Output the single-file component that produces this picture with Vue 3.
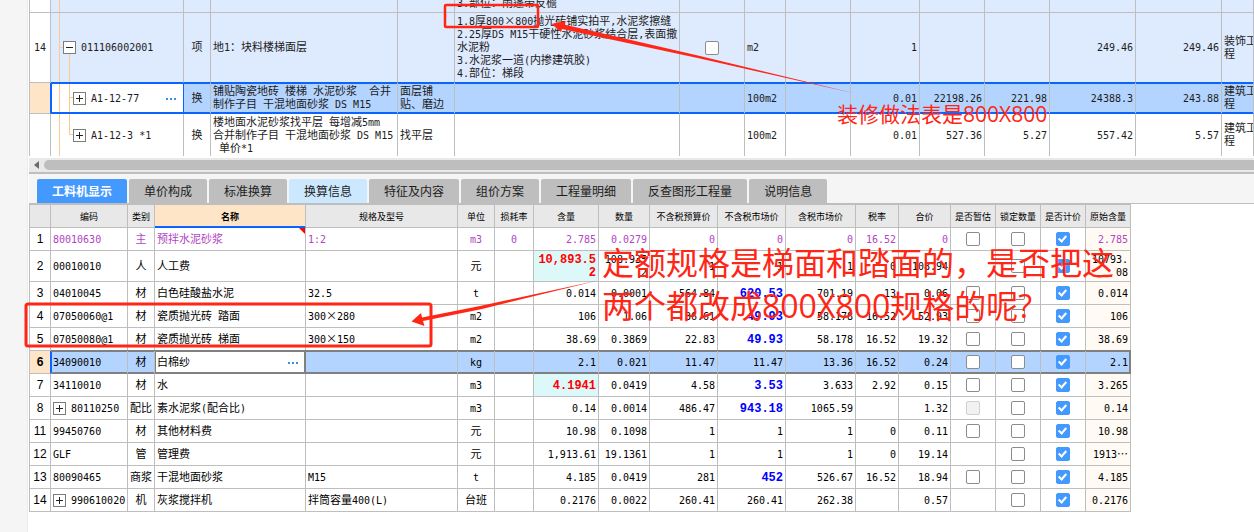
<script setup>
import { h } from 'vue'

// Splits a label into half-width and full-width runs so each gets its own face.
const Txt = (props) =>
  String(props.t ?? '').split('\n').map((line) =>
    h('span', { class: 'txt-line' },
      (line.match(/[\x20-\x7e]+|[^\x20-\x7e]+/g) || ['\u00a0']).map((run) =>
        h('span', { class: /^[\x20-\x7e]/.test(run) ? 'txt-latin' : 'txt-han' }, run)
      )
    )
  )
Txt.props = ['t']

const topCols = [21, 133, 27, 187, 57, 225, 65, 41, 65, 69, 65, 65, 86, 86]
const tabs = ['工料机显示', '单价构成', '标准换算', '换算信息', '特征及内容', '组价方案', '工程量明细', '反查图形工程量', '说明信息']
const cols = [
  ['', 21], ['编码', 77], ['类别', 27], ['名称', 151], ['规格及型号', 152], ['单位', 37], ['损耗率', 39],
  ['含量', 65], ['数量', 51], ['不含税预算价', 68], ['不含税市场价', 68], ['含税市场价', 70],
  ['税率', 43], ['合价', 52], ['是否暂估', 45], ['锁定数量', 45], ['是否计价', 45], ['原始含量', 45]
]
const r = (no, code, type, name, spec, unit, loss, qty, amount, budget, market, taxed, rate, total, est, orig, extra = {}) =>
  ({ no, code, type, name, spec, unit, loss, nums: [qty, amount, budget, market, taxed, rate, total], est, orig, ...extra })
const rows = [
  r('1', '80010630', '主', '预拌水泥砂浆', '1:2', 'm3', '0', '2.785', '0.0279', '0', '0', '0', '16.52', '0', 'on', '2.785', { primary: true }),
  r('2', '00010010', '人', '人工费', '', '元', '', '10,893.5\n2', '108.935\n2', '1', '1', '1', '0', '108.94', '', '10793.\n08', { changed: true, tall: true }),
  r('3', '04010045', '材', '白色硅酸盐水泥', '32.5', 't', '', '0.014', '0.0001', '564.84', '620.53', '701.19', '13', '0.06', 'on', '0.014', { priced: true }),
  r('4', '07050060@1', '材', '瓷质抛光砖 踏面', '300×280', 'm2', '', '106', '1.06', '36.61', '49.93', '58.178', '16.52', '52.93', 'on', '106', { priced: true }),
  r('5', '07050080@1', '材', '瓷质抛光砖 梯面', '300×150', 'm2', '', '38.69', '0.3869', '22.83', '49.93', '58.178', '16.52', '19.32', 'on', '38.69', { priced: true }),
  r('6', '34090010', '材', '白棉纱', '', 'kg', '', '2.1', '0.021', '11.47', '11.47', '13.36', '16.52', '0.24', 'on', '2.1', { current: true }),
  r('7', '34110010', '材', '水', '', 'm3', '', '4.1941', '0.0419', '4.58', '3.53', '3.633', '2.92', '0.15', 'on', '3.265', { changed: true, priced: true }),
  r('8', '80110250', '配比', '素水泥浆(配合比)', '', 'm3', '', '0.14', '0.0014', '486.47', '943.18', '1065.59', '', '1.32', 'off', '0.14', { group: true, priced: true }),
  r('11', '99450760', '材', '其他材料费', '', '元', '', '10.98', '0.1098', '1', '1', '1', '0', '0.11', 'on', '10.98'),
  r('12', 'GLF', '管', '管理费', '', '元', '', '1,913.61', '19.1361', '1', '1', '1', '0', '19.14', '', '1913…'),
  r('13', '80090465', '商浆', '干混地面砂浆', 'M15', 't', '', '4.185', '0.0419', '281', '452', '526.67', '16.52', '18.94', 'on', '4.185', { priced: true }),
  r('14', '990610020', '机', '灰浆搅拌机', '拌筒容量400(L)', '台班', '', '0.2176', '0.0022', '260.41', '260.41', '262.38', '', '0.57', '', '0.2176', { group: true })
]
</script>

<template>
  <div class="app">
    <aside class="gutter"></aside>
    <main class="workspace">
      <section class="bill">
        <table class="grid top">
          <colgroup>
            <col v-for="(w, i) in topCols" :key="i" :style="{ width: w + 'px' }">
            <col>
          </colgroup>
          <tbody>
            <tr class="cut item">
              <td class="no"></td>
              <td><svg class="tree" width="30" height="12"><path d="M8.500 0V12" /></svg></td>
              <td></td><td></td><td></td>
              <td><div class="peek"><div><Txt t="3.部位：雨篷带反檐" /></div></div></td>
              <td v-for="n in 9" :key="n"></td>
            </tr>
            <tr class="item tall">
              <td class="no"><Txt t="14" /></td>
              <td>
                <svg class="tree" width="30" height="69"><path d="M8.500 0V69M8.500 34.500H12M18.500 40V69" /></svg>
                <div class="node"><button class="toggle open" aria-label="折叠"></button><Txt t="011106002001" /></div>
              </td>
              <td class="mid"><Txt t="项" /></td>
              <td><Txt t="地1：块料楼梯面层" /></td>
              <td></td>
              <td><Txt :t="'1.8厚800×800抛光砖铺实拍平,水泥浆擦缝\n2.25厚DS M15干硬性水泥砂浆结合层,表面撒\n水泥粉\n3.水泥浆一道(内掺建筑胶)\n4.部位：梯段'" /></td>
              <td class="mid"><input type="checkbox" aria-label="锁定综合单价"></td>
              <td><Txt t="m2" /></td>
              <td></td>
              <td class="num"><Txt t="1" /></td>
              <td></td><td></td>
              <td class="num"><Txt t="249.46" /></td>
              <td class="num"><Txt t="249.46" /></td>
              <td><Txt :t="'装饰工\n程'" /></td>
            </tr>
            <tr class="picked">
              <td class="no"></td>
              <td class="edit">
                <svg class="tree" width="30" height="30"><path d="M8.500 1V29M18.500 1V29M18.500 14.500H22" /></svg>
                <div class="node child"><button class="toggle" aria-label="展开"></button><Txt t="A1-12-77" /></div>
                <button class="more" aria-label="选择定额"><i></i><i></i><i></i></button>
              </td>
              <td class="mid"><Txt t="换" /></td>
              <td><Txt :t="'铺贴陶瓷地砖 楼梯 水泥砂浆  合并\n制作子目 干混地面砂浆 DS M15'" /></td>
              <td><Txt :t="'面层铺\n贴、磨边'" /></td>
              <td></td><td></td>
              <td><Txt t="100m2" /></td>
              <td></td>
              <td class="num"><Txt t="0.01" /></td>
              <td class="num"><Txt t="22198.26" /></td>
              <td class="num"><Txt t="221.98" /></td>
              <td class="num"><Txt t="24388.3" /></td>
              <td class="num"><Txt t="243.88" /></td>
              <td><Txt :t="'建筑工\n程'" /></td>
            </tr>
            <tr class="last">
              <td class="no"></td>
              <td>
                <svg class="tree" width="30" height="42"><path d="M8.500 0V42M18.500 0V20.500H22" /></svg>
                <div class="node child"><button class="toggle" aria-label="展开"></button><Txt t="A1-12-3 *1" /></div>
              </td>
              <td class="mid"><Txt t="换" /></td>
              <td><Txt :t="'楼地面水泥砂浆找平层 每增减5mm\n合并制作子目 干混地面砂浆 DS M15\n 单价*1'" /></td>
              <td><Txt t="找平层" /></td>
              <td></td><td></td>
              <td><Txt t="100m2" /></td>
              <td></td>
              <td class="num"><Txt t="0.01" /></td>
              <td class="num"><Txt t="527.36" /></td>
              <td class="num"><Txt t="5.27" /></td>
              <td class="num"><Txt t="557.42" /></td>
              <td class="num"><Txt t="5.57" /></td>
              <td><Txt :t="'建筑工\n程'" /></td>
            </tr>
          </tbody>
        </table>
      </section>

      <div class="scroll">
        <button class="arrow" aria-label="向左滚动"><svg width="5" height="8"><path d="M5 0V8L0 4Z" fill="#6a6a72" /></svg></button>
        <div class="thumb"></div>
      </div>

      <nav class="tabs">
        <button v-for="(t, i) in tabs" :key="t" :class="{ active: i === 0, hint: i === 3 }">{{ t }}</button>
      </nav>

      <section class="detail">
        <table class="grid res">
          <colgroup><col v-for="(c, i) in cols" :key="i" :style="{ width: c[1] + 'px' }"></colgroup>
          <thead>
            <tr><th v-for="(c, i) in cols" :key="i" :class="{ sorted: i === 3 }">{{ c[0] }}</th></tr>
          </thead>
          <tbody>
            <tr v-for="x in rows" :key="x.no" :class="{ primary: x.primary, high: x.tall, current: x.current }">
              <td class="no">{{ x.no }}</td>
              <td class="code">
                <div class="cell"><button v-if="x.group" class="toggle" aria-label="展开"></button><Txt :t="x.code" /></div>
              </td>
              <td class="mid"><Txt :t="x.type" /></td>
              <td class="name" :class="{ noted: x.primary }">
                <Txt :t="x.name" />
                <button v-if="x.current" class="more" aria-label="选择材料"><i></i><i></i><i></i></button>
              </td>
              <td><Txt :t="x.spec" /></td>
              <td class="mid"><Txt :t="x.unit" /></td>
              <td class="mid"><Txt :t="x.loss" /></td>
              <td v-for="(n, i) in x.nums" :key="i" class="num" :class="{ changed: i === 0 && x.changed, priced: i === 3 && x.priced }"><Txt :t="n" /></td>
              <td class="mid"><input v-if="x.est" type="checkbox" :disabled="x.est === 'off'" :aria-label="x.name + ' 是否暂估'"></td>
              <td class="mid"><input type="checkbox" :aria-label="x.name + ' 锁定数量'"></td>
              <td class="mid"><input type="checkbox" checked :aria-label="x.name + ' 是否计价'"></td>
              <td class="num orig"><Txt :t="x.orig" /></td>
            </tr>
          </tbody>
        </table>
      </section>
    </main>

    <svg class="marks" aria-hidden="true">
      <g fill="none" stroke="#ff2616" stroke-linejoin="round">
        <rect x="445" y="5" width="93" height="22" rx="1" stroke-width="2.500" />
        <rect x="26" y="304" width="405" height="42" rx="2" stroke-width="3" />
      </g>
      <g fill="#ff2616">
        <path d="M551.500 24L565.500 21L565 24.800L700 56L855 93.500L700 58.500L562 29L561 32Z" />
        <path d="M411.500 321.500L421 313L422 317.500L480 306L598 280.500L482 309L423 321L424.500 326Z" />
      </g>
    </svg>
    <p class="note small">装修做法表是800X800</p>
    <p class="note big">定额规格是梯面和踏面的，是否把这<br>两个都改成800X800规格的呢?</p>
  </div>
</template>

<style>
html, body { background: #fff; overflow: hidden; }
.txt-line { display: block; margin: -1px 0 1px; white-space: pre; line-height: 13px; font-size: 11px; }
.txt-latin { font-family: "DejaVu Sans Mono", monospace; font-size: 10px; line-height: 10px; }
.txt-han { line-height: 13px; }
.changed .txt-latin, .priced .txt-latin { font: bold 12px/10px "Liberation Mono", monospace; }
</style>

<style scoped>
.app {
  position: relative;
  display: flex;
  min-height: 100vh;
  overflow: hidden;
  color: #1c1c1c;
  font-family: "Noto Sans CJK SC", sans-serif;
  font-size: 11px;
}
.gutter { flex: 0 0 27px; background: #f5f5f5; border-right: 1px solid #ececec; }
.workspace { flex: 1; min-width: 0; padding-left: 1px; }
button { font: inherit; border: 0; padding: 0; margin: 0; background: none; color: inherit; }

.grid { table-layout: fixed; border-collapse: separate; border-spacing: 0; border-left: 1px solid #bebebe; }
td, th { box-sizing: border-box; border-right: 1px solid #bebebe; border-bottom: 1px solid #bebebe; padding: 0; overflow: hidden; }
td { position: relative; padding: 0 2px; vertical-align: middle; }
.mid { text-align: center; padding: 0; }
.num { text-align: right; }
.no { text-align: center; padding: 0; }

.bill { overflow: hidden; }
.top { width: 100%; }
.item td { background: #deeafe; }
.item .no { background: #fff; }
.cut td { height: 13px; }
.peek { display: flex; align-items: flex-end; height: 12px; padding-bottom: 2px; box-sizing: border-box; }
.tall td { height: 70px; }
.tall td:not(.no) { border-bottom-color: #0a64ff; }
.picked td { height: 31px; background: #b3d4ff; border-bottom-color: #0a64ff; box-shadow: inset 0 1px #0a64ff, inset 0 -1px #0a64ff; }
.picked .no { background: #ffe5c7; border-color: #bebebe; border-right-color: #0a64ff; box-shadow: none; }
.picked .edit { background: #fff; border-right-color: #0a64ff; box-shadow: inset 0 1px #0a64ff, inset 0 -1px #0a64ff, inset 1px 0 #0a64ff; }
.last td { height: 42px; border-bottom: 0; }
.tree { position: absolute; left: 0; top: 0; fill: none; stroke: #ffc98a; }
.node { position: relative; display: flex; align-items: center; gap: 5px; padding-left: 10px; }
.node.child { padding-left: 20px; }
.toggle {
  flex: none;
  width: 13px;
  height: 13px;
  border: 1px solid #7c7c7c;
  background:
    linear-gradient(#222, #222) center / 7px 1px no-repeat,
    linear-gradient(#222, #222) center / 1px 7px no-repeat,
    #fff;
}
.toggle.open { background: linear-gradient(#222, #222) center / 7px 1px no-repeat, #fff; }
.more { position: absolute; right: 7px; top: 50%; display: flex; gap: 2px; }
.more i { width: 2px; height: 2px; background: #3d8fd8; }

.scroll { display: flex; align-items: center; gap: 5px; height: 14px; padding-left: 5px; margin-top: 2px; background: #e9e9e9; border-bottom: 2px solid #bebebe; }
.arrow { display: flex; }
.thumb { flex: 1; height: 10px; border-radius: 5px 0 0 5px; background: #bebebe; }

.tabs { display: flex; gap: 2px; padding: 5px 8px 0; background: #f5f5f5; border-bottom: 1px solid #bebebe; }
.tabs button { height: 24px; padding: 0 15px; border-radius: 2px 2px 0 0; background: #bebebe; font-size: 12px; line-height: 24px; white-space: nowrap; }
.tabs .hint { background: #cce8ff; }
.tabs .active { background: #4499ff; color: #fff; font-weight: bold; }

.res { width: 1102px; color: #000; }
th { height: 24px; border-top: 1px solid #bebebe; background: #e8e8e8; font-size: 9px; line-height: 13px; font-weight: normal; white-space: nowrap; }
th.sorted { background: #ffe5c7; font-weight: bold; border-bottom-color: #0a64ff; box-shadow: inset 0 -1px #0a64ff; }
.res td { height: 23px; }
.res .high td { height: 31px; }
.res .no { font: 12px/16px "Liberation Sans", sans-serif; }
.cell { display: flex; align-items: center; gap: 5px; }
.primary td:not(.no) { color: #b244c4; }
.noted::after { content: ""; position: absolute; right: 0; top: 0; border: 3px solid transparent; border-top-color: #f00; border-right-color: #f00; }
.res .changed { background: #dcf8f8; color: #f00; }
.res .priced { color: #00f; }
.orig { background: #fffaf3; }
.current td { background: #b3d4ff; border-bottom-color: #808080; box-shadow: inset 0 1px #808080, inset 0 -1px #808080, 0 -1px #808080; }
.res .current .no { background: #ffe5c7; font-weight: bold; border-bottom-color: #bebebe; border-right-color: #0a64ff; box-shadow: none; }
.current .code { box-shadow: inset 0 1px #808080, inset 0 -1px #808080, 0 -1px #808080, inset 1px 0 #0a64ff; }
.current .name { background: #fff; border-right-color: #808080; box-shadow: inset 0 0 0 1px #808080, 0 -1px #808080; }
.current td:last-child { border-right-color: #808080; box-shadow: inset 0 1px #808080, inset -1px -1px #808080, 0 -1px #808080; }

input {
  appearance: none;
  display: block;
  width: 14px;
  height: 14px;
  margin: 0 auto;
  border: 1px solid #8c8c8c;
  border-radius: 2px;
  background: #fff;
}
input:disabled { border-color: #d0d0d0; background: #f2f2f2; }
input:checked { border-color: #4499ff; background: #4499ff; }
input:checked::before {
  content: "";
  display: block;
  width: 3px;
  height: 6px;
  margin: 1px 0 0 3px;
  border: solid #fff;
  border-width: 0 2px 2px 0;
  transform: rotate(42deg);
}

.marks { position: absolute; inset: 0; width: 100%; height: 100%; pointer-events: none; }
.note { position: absolute; margin: 0; color: #ff2616; white-space: nowrap; font-family: "Open Sans", "Noto Sans CJK SC", sans-serif; pointer-events: none; }
.small { left: 837px; top: 100px; font-size: 21px; line-height: 28px; }
.big { left: 602px; top: 241px; font-size: 32px; line-height: 43px; }
</style>
